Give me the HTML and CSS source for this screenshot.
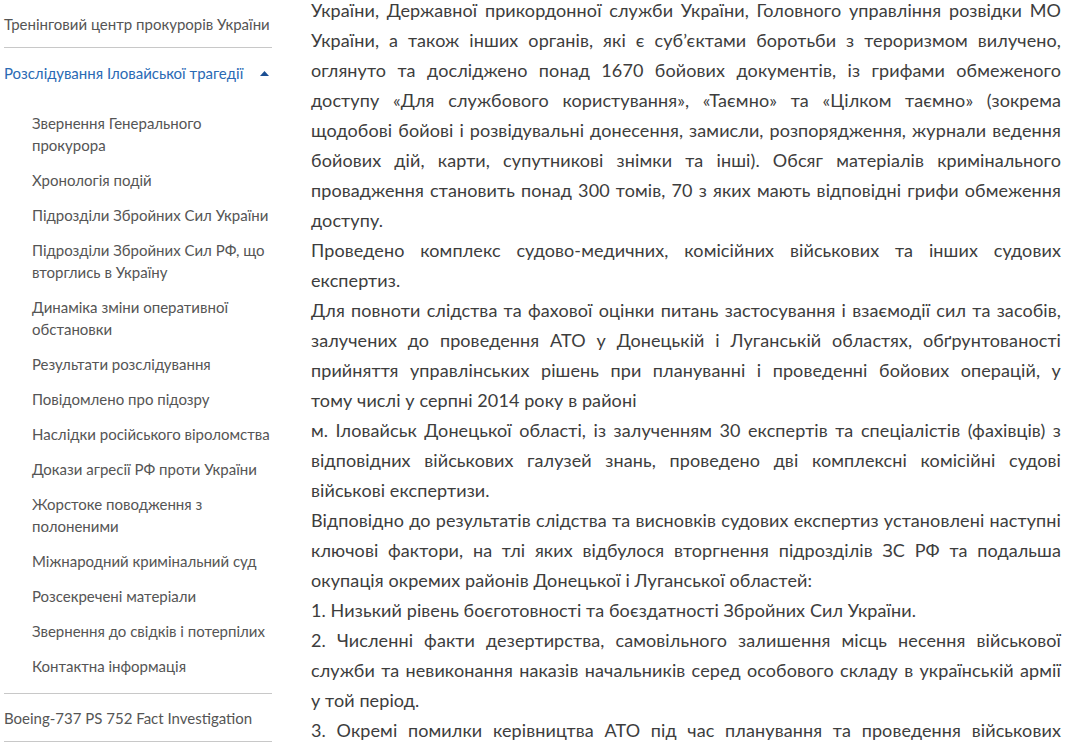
FILE: index.html
```html
<!DOCTYPE html>
<html lang="uk">
<head>
<meta charset="utf-8">
<title>Розслідування Іловайської трагедії</title>
<link rel="stylesheet" href="styles.css">
</head>
<body>
<div class="page">
  <nav class="sidebar">
    <a class="top-link" href="#">Тренінговий центр прокурорів України</a>
    <div class="group">
      <a class="top-link active" href="#">Розслідування Іловайської трагедії
        <svg class="caret" width="9" height="5" viewBox="0 0 9 5"><path d="M0 5 L4.5 0 L9 5 Z" fill="#1b4f93"/></svg>
      </a>
      <ul class="submenu">
        <li><a href="#">Звернення Генерального прокурора</a></li>
        <li><a href="#">Хронологія подій</a></li>
        <li><a href="#">Підрозділи Збройних Сил України</a></li>
        <li><a href="#">Підрозділи Збройних Сил РФ, що вторглись в Україну</a></li>
        <li><a href="#">Динаміка зміни оперативної обстановки</a></li>
        <li><a href="#">Результати розслідування</a></li>
        <li><a href="#">Повідомлено про підозру</a></li>
        <li><a href="#">Наслідки російського віроломства</a></li>
        <li><a href="#">Докази агресії РФ проти України</a></li>
        <li><a href="#">Жорстоке поводження з полоненими</a></li>
        <li><a href="#">Міжнародний кримінальний суд</a></li>
        <li><a href="#">Розсекречені матеріали</a></li>
        <li><a href="#">Звернення до свідків і потерпілих</a></li>
        <li><a href="#">Контактна інформація</a></li>
      </ul>
    </div>
    <a class="top-link" href="#">Boeing-737 PS 752 Fact Investigation</a>
  </nav>
  <main class="content">
    <p>України, Державної прикордонної служби України, Головного управління розвідки МО України, а також інших органів, які є суб’єктами боротьби з тероризмом вилучено, оглянуто та досліджено понад 1670 бойових документів, із грифами обмеженого доступу «Для службового користування», «Таємно» та «Цілком таємно» (зокрема щодобові бойові і розвідувальні донесення, замисли, розпорядження, журнали ведення бойових дій, карти, супутникові знімки та інші). Обсяг матеріалів кримінального провадження становить понад 300 томів, 70 з яких мають відповідні грифи обмеження доступу.</p>
    <p>Проведено комплекс судово-медичних, комісійних військових та інших судових експертиз.</p>
    <p>Для повноти слідства та фахової оцінки питань застосування і взаємодії сил та засобів, залучених до проведення АТО у Донецькій і Луганській областях, обґрунтованості прийняття управлінських рішень при плануванні і проведенні бойових операцій, у тому&nbsp;числі у серпні 2014 року в районі</p>
    <p>м. Іловайськ Донецької області, із залученням 30 експертів та спеціалістів (фахівців) з відповідних військових галузей знань, проведено дві комплексні комісійні судові військові експертизи.</p>
    <p>Відповідно до результатів слідства та висновків судових експертиз установлені наступні ключові фактори, на тлі яких відбулося вторгнення підрозділів ЗС РФ та подальша окупація окремих районів Донецької і Луганської областей:</p>
    <p>1. Низький рівень боєготовності та боєздатності Збройних Сил України.</p>
    <p>2. Численні факти дезертирства, самовільного залишення місць несення військової служби та невиконання наказів начальників серед особового складу в українській армії у&nbsp;той період.</p>
    <p>3. Окремі помилки керівництва АТО під час планування та проведення військових операцій, а також недоліки в організації взаємодії між підрозділами сил та засобів.</p>
  </main>
</div>
</body>
</html>
```
FILE: styles.css
```css
html, body {
  margin: 0;
  padding: 0;
  background: #fff;
  overflow: hidden;
}
body {
  font-family: Lato, "Noto Sans", sans-serif;
}
.page {
  display: flex;
  align-items: flex-start;
  height: 748px;
}
.sidebar {
  width: 268px;
  margin-left: 4px;
  flex-shrink: 0;
  display: flex;
  flex-direction: column;
}
.sidebar a {
  text-decoration: none;
}
.top-link {
  display: flex;
  align-items: center;
  justify-content: space-between;
  font-size: 15px;
  line-height: 22px;
  color: #555;
  padding: 13px 0 12px;
  border-bottom: 1px solid #c8c8c8;
}
.top-link.active {
  color: #2a6ab4;
  border-bottom: none;
  padding-top: 14px;
}
.caret {
  margin-right: 3px;
}
.group {
  border-bottom: 1px solid #c8c8c8;
}
.submenu {
  list-style: none;
  margin: 0;
  padding: 9.5px 0 9px 28px;
}
.submenu li a {
  display: block;
  font-size: 15px;
  line-height: 22px;
  padding: 6.5px 0;
  color: #555;
}
.content {
  margin-left: 39px;
  width: 750px;
  margin-top: -5px;
  color: #3d3d3d;
  font-size: 18px;
  line-height: 30px;
  letter-spacing: 0.1px;
  text-align: justify;
}
.content p {
  margin: 0;
}
```
